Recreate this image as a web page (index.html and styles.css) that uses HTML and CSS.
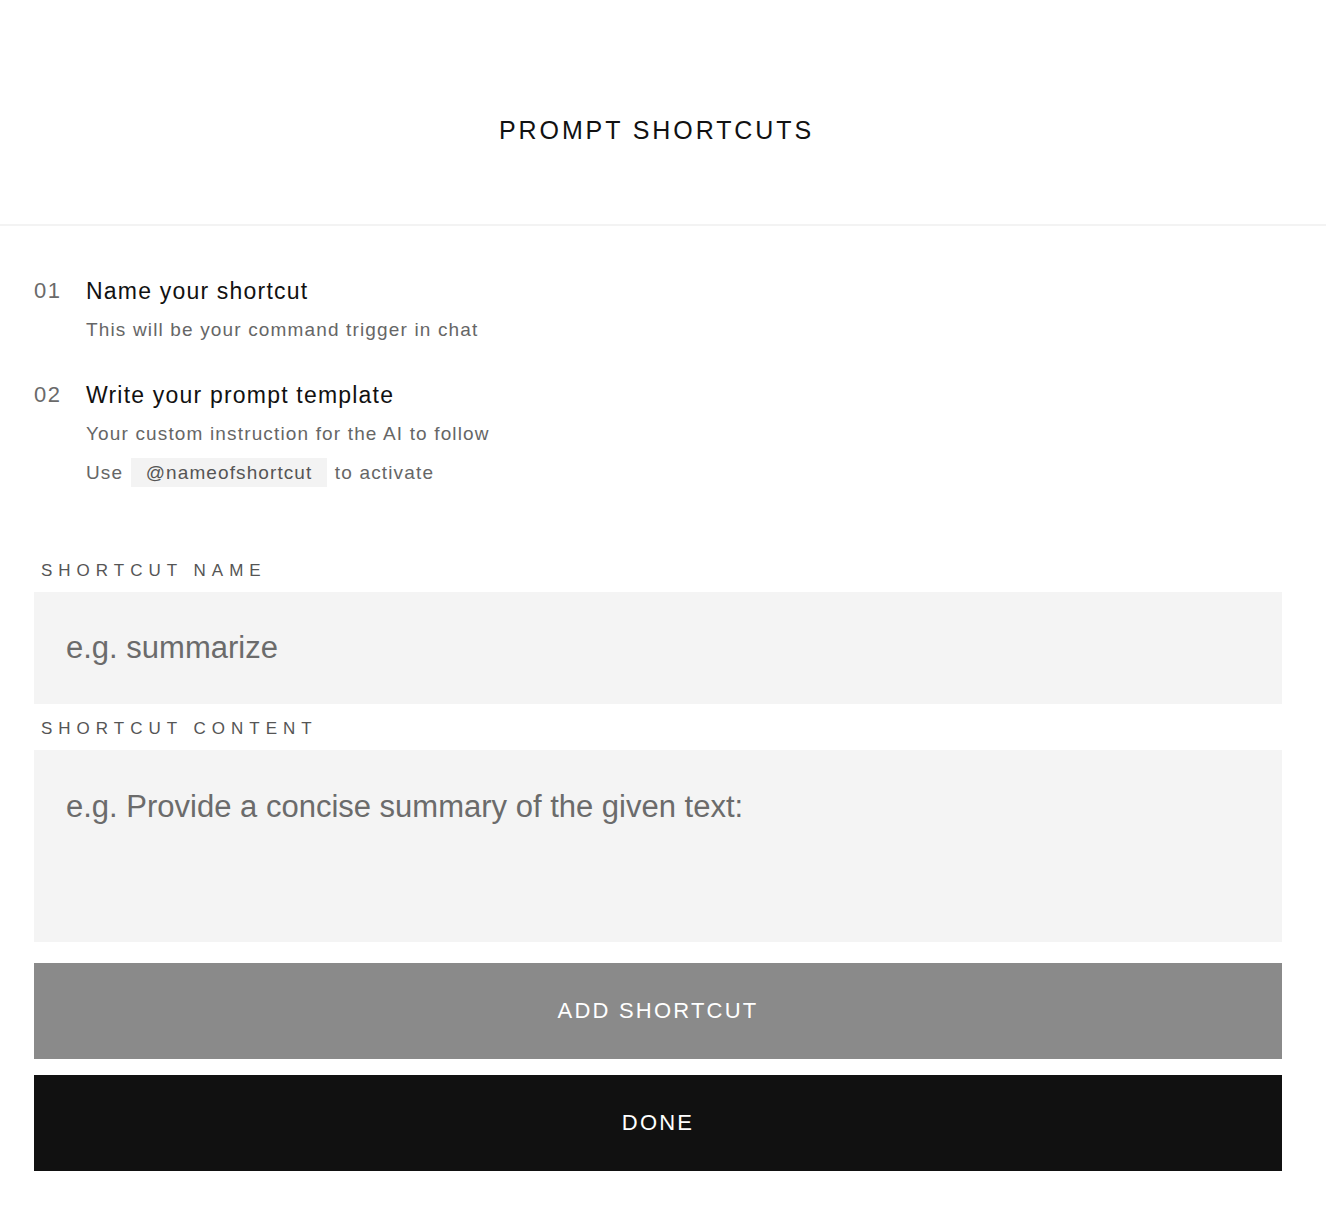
FILE: index.html
```html
<!DOCTYPE html>
<html lang="en">
<head>
<meta charset="utf-8">
<title>Prompt Shortcuts</title>
<link rel="stylesheet" href="styles.css">
</head>
<body>
<div class="page">
  <header class="header">
    <h1 class="title">PROMPT SHORTCUTS</h1>
  </header>
  <main class="content">
    <ol class="steps">
      <li class="step">
        <span class="step-num">01</span>
        <div class="step-body">
          <div class="step-title">Name your shortcut</div>
          <div class="step-sub">This will be your command trigger in chat</div>
        </div>
      </li>
      <li class="step">
        <span class="step-num">02</span>
        <div class="step-body">
          <div class="step-title">Write your prompt template</div>
          <div class="step-sub">Your custom instruction for the AI to follow</div>
          <div class="step-sub">Use <code class="chip">@nameofshortcut</code> to activate</div>
        </div>
      </li>
    </ol>
    <form class="form">
      <label class="field-label" for="name">SHORTCUT NAME</label>
      <input class="field-input" id="name" type="text" placeholder="e.g. summarize">
      <label class="field-label field-label-2" for="content">SHORTCUT CONTENT</label>
      <textarea class="field-area" id="content" placeholder="e.g. Provide a concise summary of the given text:"></textarea>
      <button type="button" class="btn btn-add">ADD SHORTCUT</button>
      <button type="button" class="btn btn-done">DONE</button>
    </form>
  </main>
</div>
</body>
</html>
```
FILE: styles.css
```css
* { box-sizing: border-box; }
html, body { margin: 0; padding: 0; background: #fff; }
body {
  font-family: "Liberation Sans", Arial, Helvetica, sans-serif;
  color: #111;
}
.header {
  padding: 112px 47px 76px 34px;
  border-bottom: 2px solid #f3f3f3;
  text-align: center;
}
.title {
  margin: 0;
  font-size: 25px;
  line-height: 36px;
  font-weight: 400;
  letter-spacing: 2.9px;
  color: #111;
}
.content {
  padding: 50px 44px 55px 34px;
}
.steps {
  list-style: none;
  margin: 0;
  padding: 0;
  display: flex;
  flex-direction: column;
  gap: 35px;
}
.step {
  display: flex;
  align-items: flex-start;
}
.step-num {
  width: 52px;
  flex: none;
  font-size: 22px;
  line-height: 30px;
  letter-spacing: 1.4px;
  color: #6a6a6a;
}
.step-body {
  display: flex;
  flex-direction: column;
  gap: 9px;
}
.step-title {
  font-size: 23px;
  line-height: 30px;
  letter-spacing: 1.2px;
  color: #111;
}
.step-sub {
  font-size: 19px;
  line-height: 30px;
  letter-spacing: 1.15px;
  color: #666;
}
.chip {
  display: inline-block;
  font-family: inherit;
  font-size: 19px;
  line-height: 29px;
  padding: 0 15px;
  margin: 0 1px;
  background: #f3f3f3;
  color: #555;
  letter-spacing: 1.1px;
}
.form {
  display: flex;
  flex-direction: column;
  margin-top: 71px;
  width: 1248px;
}
.field-label {
  font-size: 17px;
  line-height: 24px;
  letter-spacing: 6px;
  color: #555;
  margin: 0 0 9px 7px;
}
.field-label-2 { margin-top: 13px; margin-bottom: 9px; }
.field-input, .field-area {
  display: block;
  width: 100%;
  border: 0;
  outline: none;
  background: #f4f4f4;
  font-family: inherit;
  font-size: 31px;
  color: #222;
  padding: 0 32px;
  margin: 0;
  border-radius: 0;
}
.field-input {
  height: 112px;
}
.field-area {
  height: 192px;
  padding-top: 34px;
  line-height: 1.5;
  resize: none;
}
.field-input::placeholder, .field-area::placeholder {
  color: #6b6b6b;
  opacity: 1;
}
.btn {
  display: block;
  width: 100%;
  height: 96px;
  border: 0;
  border-radius: 0;
  font-family: inherit;
  font-size: 22px;
  letter-spacing: 2.2px;
  color: #fff;
  cursor: pointer;
}
.btn-add {
  margin-top: 21px;
  background: #8a8a8a;
}
.btn-done {
  margin-top: 16px;
  background: #111;
}
```
